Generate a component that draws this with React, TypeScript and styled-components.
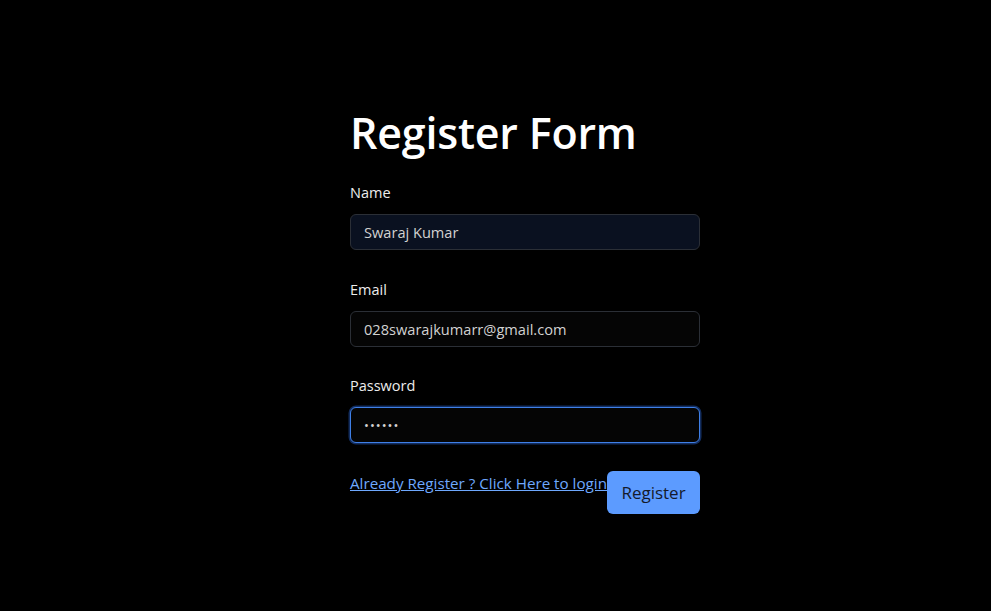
import React from "react";
import styled, { createGlobalStyle } from "styled-components";

const Global = createGlobalStyle`
  html, body { margin: 0; padding: 0; background: #000; }
  body { font-family: "Open Sans", "Noto Sans", sans-serif; color: #e6e6e6; }
  * { box-sizing: border-box; }
`;

const Page = styled.div`
  width: 991px;
  height: 611px;
  background: #000;
  display: flex;
  justify-content: flex-start;
  padding-left: 350px;
  padding-top: 105px;
`;

const Form = styled.form`
  width: 350px;
  display: flex;
  flex-direction: column;
`;

const Title = styled.h1`
  margin: 0 0 21px 0;
  font-size: 43px;
  font-weight: 600;
  line-height: 56px;
  color: #ffffff;
  letter-spacing: -0.2px;
`;

const Group = styled.div`
  display: flex;
  flex-direction: column;
  margin-bottom: 28.5px;
`;

const Label = styled.label`
  font-size: 14.5px;
  line-height: 22px;
  color: #ececec;
  margin-bottom: 10px;
`;

const Input = styled.input<{ $filled?: boolean; $focused?: boolean }>`
  height: 36px;
  width: 100%;
  padding: 0 13px;
  font-family: inherit;
  font-size: 14.6px;
  color: #d2d2d2;
  background: ${(p) => (p.$filled ? "#0a1120" : "#050505")};
  border: 1px solid ${(p) => (p.$focused ? "#3f7fe6" : "#2b2f36")};
  border-radius: 6px;
  outline: none;
  box-shadow: ${(p) => (p.$focused ? "0 0 0 1.5px rgba(40, 100, 210, 0.45)" : "none")};
  &[type="password"] {
    letter-spacing: 1px;
    font-size: 13px;
  }
`;

const Footer = styled.div`
  display: flex;
  align-items: flex-start;
  justify-content: space-between;
  margin-top: -1.5px;
`;

const LoginLink = styled.a`
  font-size: 15.2px;
  line-height: 22px;
  color: #6ea8fe;
  text-decoration: underline;
  margin-top: 2px;
  white-space: nowrap;
`;

const Button = styled.button`
  width: 93px;
  height: 43px;
  background: #5c9bff;
  color: #141a2b;
  border: none;
  border-radius: 6px;
  font-family: inherit;
  font-size: 17px;
  padding: 0;
  margin-top: 1px;
`;

export default function App() {
  return (
    <>
      <Global />
      <Page>
        <Form onSubmit={(e) => e.preventDefault()}>
          <Title>Register Form</Title>
          <Group>
            <Label>Name</Label>
            <Input $filled defaultValue="Swaraj Kumar" />
          </Group>
          <Group>
            <Label>Email</Label>
            <Input defaultValue="028swarajkumarr@gmail.com" />
          </Group>
          <Group>
            <Label>Password</Label>
            <Input $focused type="password" defaultValue="123456" />
          </Group>
          <Footer>
            <LoginLink href="#">Already Register ? Click Here to login</LoginLink>
            <Button type="submit">Register</Button>
          </Footer>
        </Form>
      </Page>
    </>
  );
}
